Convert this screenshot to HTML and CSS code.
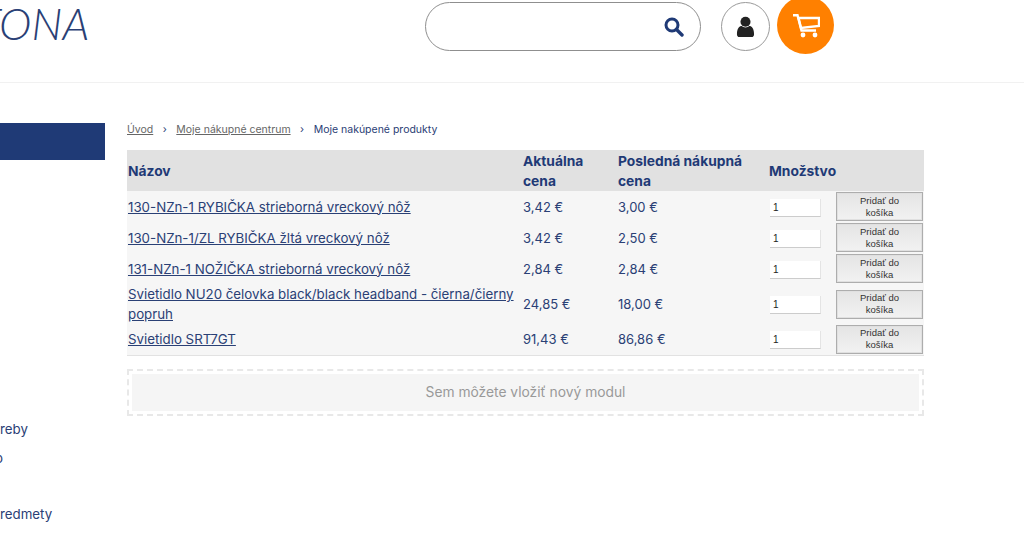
FILE: index.html
```html
<!DOCTYPE html>
<html lang="sk">
<head>
<meta charset="utf-8">
<title>Moje nakúpené produkty</title>
<link rel="stylesheet" href="styles.css">
</head>
<body>
<header class="header">
  <div class="logo"><span class="logo-text">TONA</span></div>
  <div class="search">
    <svg class="search-icon" viewBox="0 0 20 20"><circle cx="8" cy="8" r="6" fill="none" stroke="#1f3a76" stroke-width="3"/><path d="M12.5 12.5L18 18" stroke="#1f3a76" stroke-width="3.4" stroke-linecap="round"/></svg>
  </div>
  <div class="user">
    <svg class="user-icon" viewBox="0 0 20 22"><circle cx="10" cy="5.500" r="5.300" fill="#222"/><path d="M1 18.500c0-6 2.500-8.500 5-8.500 1 .9 2.400 1.400 4 1.400s3-.5 4-1.400c2.500 0 5 2.500 5 8.500 0 1.800-1 3-2.500 3h-13C2 21.500 1 20.300 1 18.500z" fill="#222"/></svg>
  </div>
  <div class="cart">
    <svg class="cart-icon" viewBox="0 1 28 24"><path d="M1 2.200h4.500l4 15.300h14.500" fill="none" stroke="#fff" stroke-width="2.400"/><path d="M6.500 5H27v8L9 15z" fill="none" stroke="#fff" stroke-width="2.400"/><circle cx="11" cy="22" r="2.400" fill="#fff"/><circle cx="23" cy="22" r="2.400" fill="#fff"/></svg>
  </div>
</header>
<div class="page">
  <aside class="sidebar">
    <div class="side-bar"></div>
    <ul class="side-list">
      <li class="side-item">reby</li>
      <li class="side-item side-item-cut">o</li>
      <li class="side-item side-item-gap">redmety</li>
    </ul>
  </aside>
  <main class="content">
    <nav class="crumbs">
      <a class="crumb-link" href="#">Úvod</a><span class="crumb-sep">›</span><a class="crumb-link" href="#">Moje nákupné centrum</a><span class="crumb-sep">›</span><span class="crumb-now">Moje nakúpené produkty</span>
    </nav>
    <table class="products">
      <colgroup><col class="c-name"><col class="c-now"><col class="c-last"><col class="c-qty"><col class="c-btn"></colgroup>
      <thead>
        <tr class="head-row"><th>Názov</th><th>Aktuálna cena</th><th>Posledná nákupná cena</th><th>Množstvo</th><th></th></tr>
      </thead>
      <tbody>
        <tr class="row"><td><a class="prod" href="#">130-NZn-1 RYBIČKA strieborná vreckový nôž</a></td><td>3,42 €</td><td>3,00 €</td><td><input class="qty" value="1"></td><td><button class="add">Pridať do košíka</button></td></tr>
        <tr class="row"><td><a class="prod" href="#">130-NZn-1/ZL RYBIČKA žltá vreckový nôž</a></td><td>3,42 €</td><td>2,50 €</td><td><input class="qty" value="1"></td><td><button class="add">Pridať do košíka</button></td></tr>
        <tr class="row"><td><a class="prod" href="#">131-NZn-1 NOŽIČKA strieborná vreckový nôž</a></td><td>2,84 €</td><td>2,84 €</td><td><input class="qty" value="1"></td><td><button class="add">Pridať do košíka</button></td></tr>
        <tr class="row"><td><a class="prod" href="#">Svietidlo NU20 čelovka black/black headband - čierna/čierny popruh</a></td><td>24,85 €</td><td>18,00 €</td><td><input class="qty" value="1"></td><td><button class="add">Pridať do košíka</button></td></tr>
        <tr class="row"><td><a class="prod" href="#">Svietidlo SRT7GT</a></td><td>91,43 €</td><td>86,86 €</td><td><input class="qty" value="1"></td><td><button class="add">Pridať do košíka</button></td></tr>
      </tbody>
    </table>
    <div class="module"><div class="module-inner">Sem môžete vložiť nový modul</div></div>
  </main>
</div>
</body>
</html>
```
FILE: styles.css
```css
* { box-sizing: border-box; }
html, body { margin: 0; padding: 0; height: 550px; overflow: hidden; background: #fff; }
body { font-family: Inter, "Open Sans", sans-serif; color: #2a4075; }

.header { height: 83px; border-bottom: 1px solid #f1f1f1; display: flex; align-items: flex-start; padding-top: 2px; }
.logo { width: 425px; overflow: hidden; height: 60px; }
.logo-text { display: block; margin-left: -23px; font-family: Lato, sans-serif; font-style: italic; font-weight: 300; font-size: 44px; line-height: 42px; color: #2a4075; }
.search { width: 276px; height: 49px; border: 1px solid #8f8f8f; border-radius: 25px; display: flex; align-items: center; justify-content: flex-end; padding-right: 16px; }
.search-icon { width: 20px; height: 20px; }
.user { width: 49px; height: 49px; margin-left: 20px; border: 1px solid #9a9a9a; border-radius: 50%; display: flex; align-items: center; justify-content: center; }
.user-icon { width: 19px; height: 22px; }
.cart { width: 57px; height: 58px; margin-left: 7px; margin-top: -6px; background: #ff8000; border-radius: 50%; display: flex; align-items: center; justify-content: center; padding-top: 2px; }
.cart-icon { width: 28px; height: 24px; }

.page { display: flex; }
.sidebar { width: 105px; overflow: hidden; padding-top: 40px; flex: none; }
.side-bar { height: 37px; background: #1f3a76; }
.side-list { list-style: none; margin: 259px 0 0; padding: 0; font-size: 13.300px; line-height: 20px; color: #2a4075; }
.side-item { height: 20px; margin-bottom: 9px; }
.side-item-cut { margin-left: -5px; }
.side-item-gap { margin-top: 36px; }

.content { width: 797px; margin-left: 22px; padding-top: 40px; }
.crumbs { height: 27px; font-size: 10.500px; line-height: 13px; color: #2a4075; }
.crumb-link { color: #666; text-decoration: underline; }
.crumb-now { color: #2a4075; }
.crumb-sep { margin: 0 9.500px; }

.products { width: 797px; table-layout: fixed; border-collapse: collapse; font-size: 13px; line-height: 20px; background: #f6f6f6; border-bottom: 1px solid #e2e2e2; }
.c-name { width: 395px; } .c-now { width: 95px; } .c-last { width: 151px; } .c-qty { width: 67px; } .c-btn { width: 89px; }
.head-row { background: #e1e1e1; height: 41px; }
.products th { text-align: left; font-size: 13.800px; font-weight: 700; padding: 0 1px; color: #1f3a76; }
.products td { padding: 0 1px; vertical-align: middle; }
.row { height: 31px; }
.prod { color: #2a4075; text-decoration: underline; font-size: 13.300px; }
.qty { display: block; margin: 2px 0 0 1px; width: 51px; height: 18px; border: 0; border-bottom: 1px solid #ccc; border-right: 1px solid #e4e4e4; background: #fff; font: 10px "Liberation Sans", sans-serif; padding: 0 3px; color: #222; }
.add { display: block; width: 87px; height: 29px; margin: 0 auto; padding: 0 8px; font: 9.500px/12px "Liberation Sans", sans-serif; color: #333; border: 1px solid #adadad; box-shadow: inset 0 0 0 1px #e0e0e0; background: linear-gradient(#e4e4e4, #f2f2f2); }

.module { margin-top: 13px; height: 47px; border: 2px dashed #e8e8e8; padding: 3px; }
.module-inner { height: 37px; background: #f5f5f5; text-align: center; font-size: 13.800px; line-height: 36px; color: #999; }
```
